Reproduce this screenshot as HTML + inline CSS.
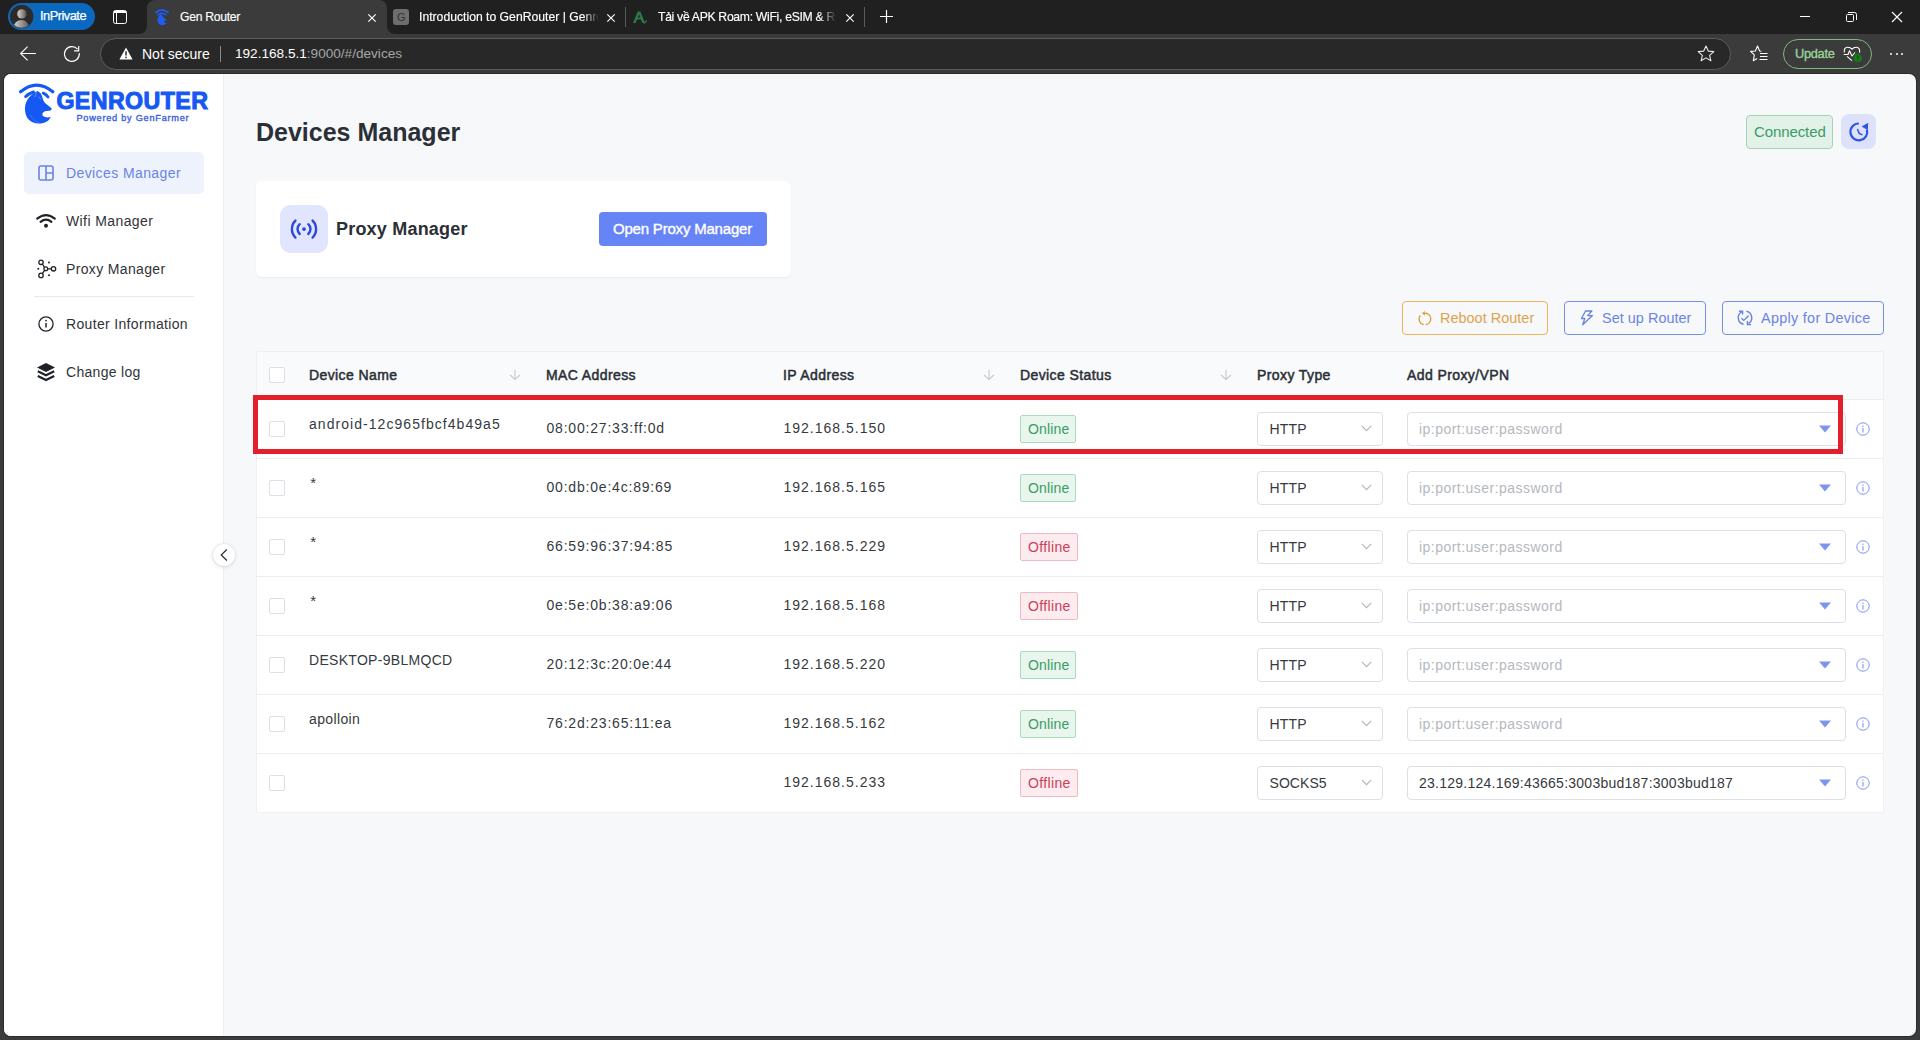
<!DOCTYPE html>
<html><head><meta charset="utf-8">
<style>
*{box-sizing:border-box;margin:0;padding:0}
html,body{width:1920px;height:1040px;overflow:hidden;background:#3b3b3b;font-family:"Liberation Sans",sans-serif;position:relative}
.a{position:absolute}
.t{position:absolute;white-space:nowrap;line-height:1}
svg{position:absolute;overflow:visible}
#tabs{left:0;top:0;width:1920px;height:34px;background:#202020}
#toolbar{left:0;top:34px;width:1920px;height:40px;background:#3b3b3b}
#view{left:4px;top:74px;width:1912px;height:962px;background:#f7f8fa;border-radius:7px;overflow:hidden;box-shadow:0 0 0 1px #2c2c2c}
#side{left:4px;top:74px;width:220px;height:962px;background:#fff;border-right:1px solid #eceef2;border-radius:7px 0 0 7px}
</style></head><body>
<!-- ============ TAB STRIP ============ -->
<div id="tabs" class="a"></div>
<!-- InPrivate pill -->
<div class="a" style="left:8px;top:3px;width:87px;height:27px;border-radius:14px;background:#0a68bf"></div>
<svg style="left:8px;top:3px" width="28" height="28" viewBox="0 0 28 28"><defs><linearGradient id="pg" x1="0" y1="0" x2="1" y2="0"><stop offset="0.2" stop-color="#c4c0bb"/><stop offset="1" stop-color="#56524e"/></linearGradient><clipPath id="avc"><circle cx="13.7" cy="13.6" r="11.2"/></clipPath></defs><circle cx="13.7" cy="13.6" r="12.4" fill="#0e3a66" stroke="#2066ac" stroke-width="1.2"/><circle cx="13.7" cy="13.6" r="11.2" fill="#2c2b29"/><g clip-path="url(#avc)"><circle cx="13.9" cy="10.9" r="4.7" fill="url(#pg)"/><path d="M4.5 27 Q6 17.2 13.6 17 Q20.2 17.2 22.2 27Z" fill="url(#pg)"/></g></svg>
<div class="t" style="left:40px;top:10px;font-size:12.8px;color:#fff;letter-spacing:-0.5px;-webkit-text-stroke:0.25px #fff">InPrivate</div>
<!-- tab actions icon -->
<div class="a" style="left:113px;top:10px;width:14px;height:14px;border:1.4px solid #fff;border-radius:2.5px"></div>
<div class="a" style="left:116px;top:11px;width:1.4px;height:12px;background:#fff"></div>
<div class="a" style="left:114px;top:11px;width:12px;height:1.6px;background:#fff"></div>
<!-- active tab -->
<div class="a" style="left:147px;top:0;width:240px;height:34px;background:#3b3b3b;border-radius:8px 8px 0 0"></div>
<div class="a" style="left:139px;top:26px;width:8px;height:8px;background:#3b3b3b"></div>
<div class="a" style="left:131px;top:18px;width:16px;height:16px;background:#202020;border-radius:0 0 8px 0"></div>
<div class="a" style="left:387px;top:26px;width:8px;height:8px;background:#3b3b3b"></div>
<div class="a" style="left:387px;top:18px;width:16px;height:16px;background:#202020;border-radius:0 0 0 8px"></div>
<svg style="left:155px;top:8px" width="14" height="18" viewBox="0 0 14 18"><path d="M1 4.5 Q7 -0.5 13 4.5" stroke="#1d5cf5" stroke-width="1.8" fill="none" stroke-linecap="round"/><path d="M3 6.8 Q7 4 11 6.8" stroke="#1d5cf5" stroke-width="1.6" fill="none" stroke-linecap="round"/><path d="M6 6 L9 10 L12 12 Q9 12.5 9 14 Q10 15.5 12 15 Q9 18 6 17 Q2 15.5 2.5 11 Q3 8 6 6Z" fill="#1d5cf5"/></svg>
<div class="t" style="left:180px;top:11px;font-size:12.2px;color:#fff;letter-spacing:-0.3px;-webkit-text-stroke:0.15px #fff">Gen Router</div>
<svg style="left:367.5px;top:13.5px" width="8" height="8" viewBox="0 0 8 8"><path d="M0.3 0.3L7.7 7.7M7.7 0.3L0.3 7.7" stroke="#fff" stroke-width="1.15"/></svg>
<!-- tab 2 -->
<div class="a" style="left:393px;top:9px;width:16px;height:16px;border-radius:3px;background:#6e6e6e"></div>
<div class="t" style="left:397px;top:12px;font-size:11px;color:#333">G</div>
<div class="t" style="left:419px;top:11px;font-size:12.2px;color:#fff;width:180px;overflow:hidden;-webkit-text-stroke:0.15px #fff;-webkit-mask-image:linear-gradient(90deg,#000 calc(100% - 16px),transparent)">Introduction to GenRouter | Genrouter</div>
<svg style="left:606.5px;top:13.8px" width="8" height="8" viewBox="0 0 8 8"><path d="M0.3 0.3L7.7 7.7M7.7 0.3L0.3 7.7" stroke="#fff" stroke-width="1.15"/></svg>
<div class="a" style="left:625px;top:7px;width:1px;height:20px;background:#5a5a5a"></div>
<!-- tab 3 -->
<svg style="left:632px;top:11px" width="16" height="13" viewBox="0 0 16 13"><path d="M1 12 L5.8 0.5 L8.4 0.5 L13 12 L10.4 12 L7.1 3.6 L3.6 12Z" fill="#2b7b47"/><path d="M3.6 7.5 L10.5 7.5" stroke="#2b7b47" stroke-width="2"/><path d="M11.2 10.8 l1.3 1.3 l2.4 -2.8" stroke="#2b7b47" stroke-width="1.1" fill="none"/></svg>
<div class="t" style="left:658px;top:11px;font-size:12.2px;color:#fff;letter-spacing:-0.3px;width:178px;overflow:hidden;-webkit-text-stroke:0.15px #fff;-webkit-mask-image:linear-gradient(90deg,#000 calc(100% - 16px),transparent)">Tải về APK Roam: WiFi, eSIM &amp; Roaming</div>
<svg style="left:845.5px;top:13.8px" width="8" height="8" viewBox="0 0 8 8"><path d="M0.3 0.3L7.7 7.7M7.7 0.3L0.3 7.7" stroke="#fff" stroke-width="1.15"/></svg>
<div class="a" style="left:864px;top:7px;width:1px;height:20px;background:#5a5a5a"></div>
<svg style="left:879.5px;top:10.2px" width="13" height="13" viewBox="0 0 13 13"><path d="M6.5 0V13M0 6.5H13" stroke="#fff" stroke-width="1.2"/></svg>
<!-- window controls -->
<div class="a" style="left:1800px;top:16px;width:10px;height:1px;background:#fff"></div>
<div class="a" style="left:1846px;top:14px;width:8px;height:8px;border:1px solid #fff;border-radius:1.5px"></div>
<svg style="left:1848px;top:12px" width="9" height="9" viewBox="0 0 9 9"><path d="M0 0.5 H6.5 Q8.5 0.5 8.5 2.5 V8" stroke="#fff" stroke-width="1" fill="none"/></svg>
<svg style="left:1892px;top:12px" width="10" height="10" viewBox="0 0 10 10"><path d="M0 0L10 10M10 0L0 10" stroke="#fff" stroke-width="1.1"/></svg>

<!-- ============ TOOLBAR ============ -->
<div id="toolbar" class="a"></div>
<svg style="left:20px;top:46px" width="17" height="16" viewBox="0 0 17 16"><path d="M15.9 7.5H0.8M7.6 0.6L0.6 7.5L7.6 14.3" stroke="#fff" stroke-width="1.1" fill="none"/></svg>
<svg style="left:64px;top:46px" width="17" height="17" viewBox="0 0 17 17"><path d="M13.57 3.24 A7.4 7.4 0 1 0 15.24 7.1" stroke="#fff" stroke-width="1.15" fill="none"/><path d="M14.7 -0.1 V4.8 H10.1" stroke="#fff" stroke-width="1.15" fill="none"/></svg>
<div class="a" style="left:100px;top:38px;width:1631px;height:32px;border-radius:16px;background:#282828;border:1px solid #5c5c5c"></div>
<svg style="left:119px;top:47px" width="14" height="13" viewBox="0 0 14 13"><path d="M7 0.5 L13.6 12.5 H0.4Z" fill="#fff"/><path d="M7 4.2V8.6" stroke="#282828" stroke-width="1.5"/><circle cx="7" cy="10.4" r="0.85" fill="#282828"/></svg>
<div class="t" style="left:142px;top:47px;font-size:14px;color:#fff">Not secure</div>
<div class="a" style="left:220px;top:46px;width:1px;height:16px;background:#8a8a8a"></div>
<div class="t" style="left:235px;top:47px;font-size:13.6px;color:#fff">192.168.5.1<span style="color:#a6a6a6">:9000/#/devices</span></div>
<svg style="left:1697px;top:45px" width="18" height="17" viewBox="0 0 18 17"><path d="M9 1 L11.3 6.1 L16.8 6.6 L12.6 10.3 L13.9 15.8 L9 12.9 L4.1 15.8 L5.4 10.3 L1.2 6.6 L6.7 6.1Z" stroke="#e8e8e8" stroke-width="1.1" fill="none" stroke-linejoin="round"/></svg>
<svg style="left:1750px;top:45px" width="18" height="17" viewBox="0 0 18 17"><path d="M11.5 6.2 L9.6 6 L7.5 1 L5.4 6 L0.6 6.4 L4.3 9.8 L3.3 15.8 L7.2 13.6" stroke="#fff" stroke-width="1.1" fill="none" stroke-linejoin="round"/><path d="M10 8.5H17.5M10 11.5H17.5M9.5 14.5H17.5" stroke="#fff" stroke-width="1"/></svg>
<div class="a" style="left:1783px;top:39px;width:89px;height:30px;border-radius:15px;border:1.3px solid #7fb87f"></div>
<div class="t" style="left:1795px;top:47.5px;font-size:12.8px;color:#9ad39a;letter-spacing:-0.3px;-webkit-text-stroke:0.35px #9ad39a">Update</div>
<svg style="left:1843px;top:45px" width="20" height="18" viewBox="0 0 20 18"><g stroke="#fff" stroke-width="1.1" fill="none" stroke-linejoin="round"><path d="M1.3 7.5 Q0.8 2.4 4.5 2.2 Q7.5 2.1 9 4.3 Q10.5 2.1 13.5 2.2 Q17.2 2.5 16.6 7.8"/><path d="M4 11.3 L9 15.6"/><path d="M0.8 9.5 H5 L6.5 5.8 L9 11 L12 7.5"/></g><circle cx="14.8" cy="13" r="4.3" fill="#17781a"/><path d="M14.8 10.8V13.6M14.8 14.6V15.3" stroke="#0b3b0b" stroke-width="0.9"/></svg>
<div class="a" style="left:1890px;top:53px;width:2.2px;height:2.2px;background:#fff;border-radius:50%"></div>
<div class="a" style="left:1895.5px;top:53px;width:2.2px;height:2.2px;background:#fff;border-radius:50%"></div>
<div class="a" style="left:1901px;top:53px;width:2.2px;height:2.2px;background:#fff;border-radius:50%"></div>

<!-- ============ VIEWPORT ============ -->
<div id="view" class="a"></div>
<div id="side" class="a"></div>
<!-- logo -->
<svg style="left:19px;top:82px" width="36" height="43" viewBox="0 0 36 43">
<path d="M1.6 9.8 Q17.6 -3.5 33.8 9.8" stroke="#1558f4" stroke-width="3.3" fill="none" stroke-linecap="round"/>
<path d="M6.6 14.6 Q10 11.5 14.5 10" stroke="#1558f4" stroke-width="2.9" fill="none" stroke-linecap="round"/>
<path d="M24.3 11.2 Q27.3 12.5 29 15" stroke="#1558f4" stroke-width="2.9" fill="none" stroke-linecap="round"/>
<path d="M18.6 9 L21.5 11 L23 14 Q24 19 26 21 L32.6 26.3 Q33.2 28.2 31 28.8 Q27.5 28.5 25.5 29.5 Q22 31.5 24 34 Q27 36.2 31.8 35 Q29 40.8 22 41.5 Q12 42 8 35.5 Q5 29.5 6.3 23 Q8 16.5 12.5 13 L15.5 10.5 Z" fill="#1558f4"/>
<path d="M11.5 33 Q13.5 38.5 20 40.5" stroke="#5f92ff" stroke-width="0.5" fill="none"/>
<path d="M19.5 15 L22 17" stroke="#7fb0ff" stroke-width="0.7"/>
<path d="M17.5 9.5 L16 15" stroke="#9fc0ff" stroke-width="0.5"/>
</svg>
<div class="t" style="left:56.4px;top:90.2px;font-size:23.2px;font-weight:bold;color:#1558f4;-webkit-text-stroke:1px #1558f4;letter-spacing:0.42px">GENROUTER</div>
<div class="t" style="left:76.5px;top:113.5px;font-size:9.2px;color:#3a60dc;letter-spacing:0.74px;-webkit-text-stroke:0.35px #3a60dc">Powered by GenFarmer</div>

<!-- nav -->
<div class="a" style="left:24px;top:152px;width:180px;height:42px;border-radius:5px;background:#eef2fd"></div>
<svg style="left:38px;top:165px" width="16" height="16" viewBox="0 0 16 16"><rect x="1" y="1" width="14" height="14" rx="2" stroke="#6a84e4" stroke-width="1.6" fill="none"/><path d="M8 1V15M8 8H15" stroke="#6a84e4" stroke-width="1.6"/></svg>
<div class="t" style="left:66px;top:166px;font-size:14px;color:#6a84e4;letter-spacing:0.4px">Devices Manager</div>

<svg style="left:36px;top:214px" width="20" height="14" viewBox="0 0 20 14"><path d="M1.2 4.6 Q10 -2.5 18.8 4.6" stroke="#1f2329" stroke-width="2.2" fill="none" stroke-linecap="round"/><path d="M4.6 7.8 Q10 3.6 15.4 7.8" stroke="#1f2329" stroke-width="2.2" fill="none" stroke-linecap="round"/><circle cx="10" cy="11.8" r="2" fill="#1f2329"/></svg>
<div class="t" style="left:66px;top:214px;font-size:14px;color:#303339;letter-spacing:0.4px">Wifi Manager</div>

<svg style="left:36px;top:259px" width="20" height="20" viewBox="0 0 20 20"><g stroke="#1f2329" stroke-width="1.3" fill="none"><circle cx="5" cy="3.3" r="2.2"/><circle cx="5" cy="16.4" r="2.2"/><circle cx="17.5" cy="9.8" r="2.2"/><circle cx="9.8" cy="9.8" r="1.9"/><path d="M6.3 5 L8.6 8.3 M6.3 14.7 L8.6 11.3 M11.7 9.8 H15.3"/></g><g fill="#1f2329"><circle cx="2.3" cy="9.8" r="1"/><circle cx="13" cy="3.5" r="1"/><circle cx="13" cy="16.2" r="1"/></g></svg>
<div class="t" style="left:66px;top:262px;font-size:14px;color:#303339;letter-spacing:0.35px">Proxy Manager</div>

<div class="a" style="left:34px;top:296px;width:160px;height:1px;background:#e8eaee"></div>

<svg style="left:38px;top:316px" width="16" height="16" viewBox="0 0 16 16"><circle cx="8" cy="8" r="7.1" stroke="#1f2329" stroke-width="1.3" fill="none"/><circle cx="8" cy="4.6" r="0.9" fill="#1f2329"/><path d="M8 7V11.5" stroke="#1f2329" stroke-width="1.5"/></svg>
<div class="t" style="left:66px;top:317px;font-size:14px;color:#303339;letter-spacing:0.33px">Router Information</div>

<svg style="left:37px;top:362px" width="18" height="20" viewBox="0 0 18 20"><path d="M9 1 L18 5.5 L9 10 L0 5.5Z" fill="#1f2329"/><path d="M0.8 9.3 L9 13.3 L17.2 9.3" stroke="#1f2329" stroke-width="2.2" fill="none" stroke-linejoin="miter"/><path d="M0.8 14 L9 18 L17.2 14" stroke="#1f2329" stroke-width="2.2" fill="none"/></svg>
<div class="t" style="left:66px;top:365px;font-size:14px;color:#303339;letter-spacing:0.3px">Change log</div>

<!-- collapse btn -->
<div class="a" style="left:212.6px;top:543.8px;width:22px;height:22px;border-radius:50%;background:#fff;box-shadow:0 1px 4px rgba(0,0,0,0.12),0 0 0 1px #f0f1f4"></div>
<svg style="left:220px;top:549px" width="8" height="12" viewBox="0 0 8 12"><path d="M6.8 0.5 L1.2 6 L6.8 11.5" stroke="#2b2f36" stroke-width="1.2" fill="none"/></svg>


<!-- ============ MAIN ============ -->
<div class="t" style="left:256px;top:119.7px;font-size:25px;font-weight:bold;color:#2b2f36">Devices Manager</div>

<div class="a" style="left:1746px;top:115px;width:87px;height:34px;border-radius:4px;background:#e2f2e9;border:1px solid #a5d3b7"></div>
<div class="t" style="left:1754px;top:124px;font-size:15px;color:#3a9b66;letter-spacing:-0.1px">Connected</div>
<div class="a" style="left:1841px;top:114px;width:35px;height:35px;border-radius:8px;background:#dde1fb"></div>
<svg style="left:1848px;top:121px" width="22" height="22" viewBox="0 0 22 22"><path d="M10.8 2.5 A8.4 8.4 0 1 0 18.9 8.6" stroke="#2f53e6" stroke-width="2.2" fill="none"/><path d="M13.6 5.6 L20.2 1.8 L19.8 9.2Z" fill="#2f53e6"/><path d="M9.4 8 L11.2 12.4 L14.4 13.9" stroke="#2f53e6" stroke-width="1.5" fill="none"/></svg>

<!-- proxy manager card -->
<div class="a" style="left:256px;top:181px;width:535px;height:96px;border-radius:6px;background:#fff;box-shadow:0 1px 2px rgba(0,0,0,0.06)"></div>
<div class="a" style="left:280px;top:205px;width:48px;height:48px;border-radius:11px;background:#e1e5fd"></div>
<svg style="left:290px;top:218px" width="28" height="22" viewBox="0 0 28 22"><g stroke="#2b48de" stroke-width="2.4" fill="none" stroke-linecap="round"><path d="M5.4 2.6 A12.1 12.1 0 0 0 5.4 19.6"/><path d="M22.6 2.6 A12.1 12.1 0 0 1 22.6 19.6"/><path d="M9.7 6.2 A6.6 6.6 0 0 0 9.7 16"/><path d="M18.3 6.2 A6.6 6.6 0 0 1 18.3 16"/></g><circle cx="14" cy="11.1" r="1.9" fill="#2b48de"/></svg>
<div class="t" style="left:336px;top:219.5px;font-size:18px;font-weight:bold;color:#2b2f36;letter-spacing:0.2px">Proxy Manager</div>
<div class="a" style="left:599px;top:212px;width:168px;height:34px;border-radius:4px;background:#6684f6"></div>
<div class="t" style="left:613px;top:220.5px;font-size:15px;color:#fff;letter-spacing:-0.2px;-webkit-text-stroke:0.35px #fff">Open Proxy Manager</div>

<!-- action buttons -->
<div class="a" style="left:1402px;top:301px;width:146px;height:34px;border-radius:4px;background:transparent;border:1px solid #ebb35e"></div>
<svg style="left:1417px;top:311px" width="16" height="16" viewBox="0 0 16 16"><g stroke="#dea141" stroke-width="1.3" fill="none"><path d="M7.6 2.3 A5.6 5.6 0 0 1 8.6 13.6"/><path d="M6.8 13.6 A5.6 5.6 0 0 1 3.4 4.4"/></g><path d="M4.9 2.3 L7.9 -0.1 L7.9 4.7Z" fill="#dea141"/></svg>
<div class="t" style="left:1440px;top:311px;font-size:14.4px;color:#dfa24a;letter-spacing:0.05px">Reboot Router</div>

<div class="a" style="left:1564px;top:301px;width:142px;height:34px;border-radius:4px;background:transparent;border:1px solid #7890e2"></div>
<svg style="left:1579px;top:309px" width="16" height="18" viewBox="0 0 16 18"><path d="M6.5 2 H12.8 L8.7 6.6 H13.5 L3.7 15.7 L5.8 9.5 H2.5Z" stroke="#6a82de" stroke-width="1.3" fill="none" stroke-linejoin="round"/></svg>
<div class="t" style="left:1602px;top:311px;font-size:14.4px;color:#6b84e4;letter-spacing:0.05px">Set up Router</div>

<div class="a" style="left:1722px;top:301px;width:162px;height:34px;border-radius:4px;background:transparent;border:1px solid #7890e2"></div>
<svg style="left:1736px;top:309px" width="18" height="18" viewBox="0 0 18 18"><g stroke="#6a82de" stroke-width="1.4" fill="none"><path d="M6.4 2.6 A6.6 6.6 0 0 0 7.6 15.2"/><path d="M3 2.25 H6.6 V5.6"/><path d="M10.4 2.3 A6.6 6.6 0 0 1 12.6 14.4"/><path d="M15 15.5 H11.4 V12.1"/><path d="M5.4 9.2 L7.8 11.4 L12.6 6.8"/></g></svg>
<div class="t" style="left:1761px;top:311px;font-size:14.4px;color:#6b84e4;letter-spacing:0.3px">Apply for Device</div>

<!-- ============ TABLE ============ -->
<div class="a" style="left:256px;top:351px;width:1628px;height:462px;background:#fff;border:1px solid #eef0f3;border-radius:2px"></div>
<div class="a" style="left:257px;top:352px;width:1626px;height:48px;background:#f9fafc;border-bottom:1px solid #ebedf1"></div>
<div class="a" style="left:269px;top:367px;width:16px;height:16px;border:1px solid #dcdfe6;border-radius:2px;background:#fff"></div>
<div class="t" style="left:309px;top:368px;font-size:14px;color:#2b2f36;-webkit-text-stroke:0.5px #2b2f36;letter-spacing:0.4px">Device Name</div>
<div class="t" style="left:546px;top:368px;font-size:14px;color:#2b2f36;-webkit-text-stroke:0.5px #2b2f36;letter-spacing:0.4px">MAC Address</div>
<div class="t" style="left:783px;top:368px;font-size:14px;color:#2b2f36;-webkit-text-stroke:0.5px #2b2f36;letter-spacing:0.4px">IP Address</div>
<div class="t" style="left:1020px;top:368px;font-size:14px;color:#2b2f36;-webkit-text-stroke:0.5px #2b2f36;letter-spacing:0.4px">Device Status</div>
<div class="t" style="left:1257px;top:368px;font-size:14px;color:#2b2f36;-webkit-text-stroke:0.5px #2b2f36;letter-spacing:0.4px">Proxy Type</div>
<div class="t" style="left:1407px;top:368px;font-size:14px;color:#2b2f36;-webkit-text-stroke:0.5px #2b2f36;letter-spacing:0.4px">Add Proxy/VPN</div>
<svg style="left:509px;top:368px" width="12" height="14" viewBox="0 0 12 14"><path d="M6 1.8V11.4M1.1 7L6 11.6L10.9 7" stroke="#c5c7cb" stroke-width="1.05" fill="none"/></svg>
<svg style="left:983px;top:368px" width="12" height="14" viewBox="0 0 12 14"><path d="M6 1.8V11.4M1.1 7L6 11.6L10.9 7" stroke="#c5c7cb" stroke-width="1.05" fill="none"/></svg>
<svg style="left:1220px;top:368px" width="12" height="14" viewBox="0 0 12 14"><path d="M6 1.8V11.4M1.1 7L6 11.6L10.9 7" stroke="#c5c7cb" stroke-width="1.05" fill="none"/></svg>
<div class="a" style="left:269px;top:421px;width:16px;height:16px;border:1px solid #dcdfe6;border-radius:2px;background:#fff"></div>
<div class="t" style="left:309px;top:417px;font-size:14px;color:#363a40;letter-spacing:1.05px">android-12c965fbcf4b49a5</div>
<div class="t" style="left:546.5px;top:421px;font-size:14px;color:#363a40;letter-spacing:0.8px">08:00:27:33:ff:0d</div>
<div class="t" style="left:783.5px;top:421px;font-size:14px;color:#363a40;letter-spacing:1.0px">192.168.5.150</div>
<div class="a" style="left:1020px;top:415px;width:56px;height:28px;border-radius:2px;background:#e8f6ee;border:1px solid #a8dcbb"></div>
<div class="t" style="left:1028px;top:422px;font-size:14px;color:#3a9c64;letter-spacing:0.15px">Online</div>
<div class="a" style="left:1257px;top:412px;width:126px;height:34px;border-radius:4px;background:#fff;border:1px solid #dcdfe6"></div>
<div class="t" style="left:1269.5px;top:422px;font-size:14px;color:#363a40;letter-spacing:0.15px">HTTP</div>
<svg style="left:1361px;top:425px" width="11" height="7" viewBox="0 0 11 7"><path d="M0.8 0.8L5.5 5.6L10.2 0.8" stroke="#b0b4bc" stroke-width="1.1" fill="none"/></svg>
<div class="a" style="left:1407px;top:412px;width:439px;height:34px;border-radius:4px;background:#fff;border:1px solid #dcdfe6"></div>
<div class="t" style="left:1419px;top:422px;font-size:14px;color:#b5b8bd;letter-spacing:0.47px">ip:port:user:password</div>
<svg style="left:1819px;top:425px" width="12" height="8" viewBox="0 0 12 8"><path d="M0 0.5H12L6 7.5Z" fill="#7e95f0"/></svg>
<svg style="left:1855.5px;top:422px" width="14" height="14" viewBox="0 0 14 14"><circle cx="7" cy="7" r="6.2" stroke="#7e95f0" stroke-width="1" fill="none"/><circle cx="7" cy="4.2" r="0.7" fill="#7e95f0"/><path d="M7 6V10.5" stroke="#7e95f0" stroke-width="1.1"/></svg>
<div class="a" style="left:257px;top:458px;width:1626px;height:1px;background:#ebedf1"></div>
<div class="a" style="left:269px;top:480px;width:16px;height:16px;border:1px solid #dcdfe6;border-radius:2px;background:#fff"></div>
<div class="t" style="left:310.2px;top:474.5px;font-size:15px;color:#363a40">*</div>
<div class="t" style="left:546.5px;top:480px;font-size:14px;color:#363a40;letter-spacing:0.8px">00:db:0e:4c:89:69</div>
<div class="t" style="left:783.5px;top:480px;font-size:14px;color:#363a40;letter-spacing:1.0px">192.168.5.165</div>
<div class="a" style="left:1020px;top:474px;width:56px;height:28px;border-radius:2px;background:#e8f6ee;border:1px solid #a8dcbb"></div>
<div class="t" style="left:1028px;top:481px;font-size:14px;color:#3a9c64;letter-spacing:0.15px">Online</div>
<div class="a" style="left:1257px;top:471px;width:126px;height:34px;border-radius:4px;background:#fff;border:1px solid #dcdfe6"></div>
<div class="t" style="left:1269.5px;top:481px;font-size:14px;color:#363a40;letter-spacing:0.15px">HTTP</div>
<svg style="left:1361px;top:484px" width="11" height="7" viewBox="0 0 11 7"><path d="M0.8 0.8L5.5 5.6L10.2 0.8" stroke="#b0b4bc" stroke-width="1.1" fill="none"/></svg>
<div class="a" style="left:1407px;top:471px;width:439px;height:34px;border-radius:4px;background:#fff;border:1px solid #dcdfe6"></div>
<div class="t" style="left:1419px;top:481px;font-size:14px;color:#b5b8bd;letter-spacing:0.47px">ip:port:user:password</div>
<svg style="left:1819px;top:484px" width="12" height="8" viewBox="0 0 12 8"><path d="M0 0.5H12L6 7.5Z" fill="#7e95f0"/></svg>
<svg style="left:1855.5px;top:481px" width="14" height="14" viewBox="0 0 14 14"><circle cx="7" cy="7" r="6.2" stroke="#7e95f0" stroke-width="1" fill="none"/><circle cx="7" cy="4.2" r="0.7" fill="#7e95f0"/><path d="M7 6V10.5" stroke="#7e95f0" stroke-width="1.1"/></svg>
<div class="a" style="left:257px;top:517px;width:1626px;height:1px;background:#ebedf1"></div>
<div class="a" style="left:269px;top:539px;width:16px;height:16px;border:1px solid #dcdfe6;border-radius:2px;background:#fff"></div>
<div class="t" style="left:310.2px;top:533.5px;font-size:15px;color:#363a40">*</div>
<div class="t" style="left:546.5px;top:539px;font-size:14px;color:#363a40;letter-spacing:0.8px">66:59:96:37:94:85</div>
<div class="t" style="left:783.5px;top:539px;font-size:14px;color:#363a40;letter-spacing:1.0px">192.168.5.229</div>
<div class="a" style="left:1020px;top:533px;width:58px;height:28px;border-radius:2px;background:#fdecef;border:1px solid #f1bac3"></div>
<div class="t" style="left:1028px;top:540px;font-size:14px;color:#cc4058;letter-spacing:0.35px">Offline</div>
<div class="a" style="left:1257px;top:530px;width:126px;height:34px;border-radius:4px;background:#fff;border:1px solid #dcdfe6"></div>
<div class="t" style="left:1269.5px;top:540px;font-size:14px;color:#363a40;letter-spacing:0.15px">HTTP</div>
<svg style="left:1361px;top:543px" width="11" height="7" viewBox="0 0 11 7"><path d="M0.8 0.8L5.5 5.6L10.2 0.8" stroke="#b0b4bc" stroke-width="1.1" fill="none"/></svg>
<div class="a" style="left:1407px;top:530px;width:439px;height:34px;border-radius:4px;background:#fff;border:1px solid #dcdfe6"></div>
<div class="t" style="left:1419px;top:540px;font-size:14px;color:#b5b8bd;letter-spacing:0.47px">ip:port:user:password</div>
<svg style="left:1819px;top:543px" width="12" height="8" viewBox="0 0 12 8"><path d="M0 0.5H12L6 7.5Z" fill="#7e95f0"/></svg>
<svg style="left:1855.5px;top:540px" width="14" height="14" viewBox="0 0 14 14"><circle cx="7" cy="7" r="6.2" stroke="#7e95f0" stroke-width="1" fill="none"/><circle cx="7" cy="4.2" r="0.7" fill="#7e95f0"/><path d="M7 6V10.5" stroke="#7e95f0" stroke-width="1.1"/></svg>
<div class="a" style="left:257px;top:576px;width:1626px;height:1px;background:#ebedf1"></div>
<div class="a" style="left:269px;top:598px;width:16px;height:16px;border:1px solid #dcdfe6;border-radius:2px;background:#fff"></div>
<div class="t" style="left:310.2px;top:592.5px;font-size:15px;color:#363a40">*</div>
<div class="t" style="left:546.5px;top:598px;font-size:14px;color:#363a40;letter-spacing:0.8px">0e:5e:0b:38:a9:06</div>
<div class="t" style="left:783.5px;top:598px;font-size:14px;color:#363a40;letter-spacing:1.0px">192.168.5.168</div>
<div class="a" style="left:1020px;top:592px;width:58px;height:28px;border-radius:2px;background:#fdecef;border:1px solid #f1bac3"></div>
<div class="t" style="left:1028px;top:599px;font-size:14px;color:#cc4058;letter-spacing:0.35px">Offline</div>
<div class="a" style="left:1257px;top:589px;width:126px;height:34px;border-radius:4px;background:#fff;border:1px solid #dcdfe6"></div>
<div class="t" style="left:1269.5px;top:599px;font-size:14px;color:#363a40;letter-spacing:0.15px">HTTP</div>
<svg style="left:1361px;top:602px" width="11" height="7" viewBox="0 0 11 7"><path d="M0.8 0.8L5.5 5.6L10.2 0.8" stroke="#b0b4bc" stroke-width="1.1" fill="none"/></svg>
<div class="a" style="left:1407px;top:589px;width:439px;height:34px;border-radius:4px;background:#fff;border:1px solid #dcdfe6"></div>
<div class="t" style="left:1419px;top:599px;font-size:14px;color:#b5b8bd;letter-spacing:0.47px">ip:port:user:password</div>
<svg style="left:1819px;top:602px" width="12" height="8" viewBox="0 0 12 8"><path d="M0 0.5H12L6 7.5Z" fill="#7e95f0"/></svg>
<svg style="left:1855.5px;top:599px" width="14" height="14" viewBox="0 0 14 14"><circle cx="7" cy="7" r="6.2" stroke="#7e95f0" stroke-width="1" fill="none"/><circle cx="7" cy="4.2" r="0.7" fill="#7e95f0"/><path d="M7 6V10.5" stroke="#7e95f0" stroke-width="1.1"/></svg>
<div class="a" style="left:257px;top:635px;width:1626px;height:1px;background:#ebedf1"></div>
<div class="a" style="left:269px;top:657px;width:16px;height:16px;border:1px solid #dcdfe6;border-radius:2px;background:#fff"></div>
<div class="t" style="left:309px;top:653px;font-size:14px;color:#363a40;letter-spacing:0.3px">DESKTOP-9BLMQCD</div>
<div class="t" style="left:546.5px;top:657px;font-size:14px;color:#363a40;letter-spacing:0.8px">20:12:3c:20:0e:44</div>
<div class="t" style="left:783.5px;top:657px;font-size:14px;color:#363a40;letter-spacing:1.0px">192.168.5.220</div>
<div class="a" style="left:1020px;top:651px;width:56px;height:28px;border-radius:2px;background:#e8f6ee;border:1px solid #a8dcbb"></div>
<div class="t" style="left:1028px;top:658px;font-size:14px;color:#3a9c64;letter-spacing:0.15px">Online</div>
<div class="a" style="left:1257px;top:648px;width:126px;height:34px;border-radius:4px;background:#fff;border:1px solid #dcdfe6"></div>
<div class="t" style="left:1269.5px;top:658px;font-size:14px;color:#363a40;letter-spacing:0.15px">HTTP</div>
<svg style="left:1361px;top:661px" width="11" height="7" viewBox="0 0 11 7"><path d="M0.8 0.8L5.5 5.6L10.2 0.8" stroke="#b0b4bc" stroke-width="1.1" fill="none"/></svg>
<div class="a" style="left:1407px;top:648px;width:439px;height:34px;border-radius:4px;background:#fff;border:1px solid #dcdfe6"></div>
<div class="t" style="left:1419px;top:658px;font-size:14px;color:#b5b8bd;letter-spacing:0.47px">ip:port:user:password</div>
<svg style="left:1819px;top:661px" width="12" height="8" viewBox="0 0 12 8"><path d="M0 0.5H12L6 7.5Z" fill="#7e95f0"/></svg>
<svg style="left:1855.5px;top:658px" width="14" height="14" viewBox="0 0 14 14"><circle cx="7" cy="7" r="6.2" stroke="#7e95f0" stroke-width="1" fill="none"/><circle cx="7" cy="4.2" r="0.7" fill="#7e95f0"/><path d="M7 6V10.5" stroke="#7e95f0" stroke-width="1.1"/></svg>
<div class="a" style="left:257px;top:694px;width:1626px;height:1px;background:#ebedf1"></div>
<div class="a" style="left:269px;top:716px;width:16px;height:16px;border:1px solid #dcdfe6;border-radius:2px;background:#fff"></div>
<div class="t" style="left:309px;top:712px;font-size:14px;color:#363a40;letter-spacing:0.37px">apolloin</div>
<div class="t" style="left:546.5px;top:716px;font-size:14px;color:#363a40;letter-spacing:0.8px">76:2d:23:65:11:ea</div>
<div class="t" style="left:783.5px;top:716px;font-size:14px;color:#363a40;letter-spacing:1.0px">192.168.5.162</div>
<div class="a" style="left:1020px;top:710px;width:56px;height:28px;border-radius:2px;background:#e8f6ee;border:1px solid #a8dcbb"></div>
<div class="t" style="left:1028px;top:717px;font-size:14px;color:#3a9c64;letter-spacing:0.15px">Online</div>
<div class="a" style="left:1257px;top:707px;width:126px;height:34px;border-radius:4px;background:#fff;border:1px solid #dcdfe6"></div>
<div class="t" style="left:1269.5px;top:717px;font-size:14px;color:#363a40;letter-spacing:0.15px">HTTP</div>
<svg style="left:1361px;top:720px" width="11" height="7" viewBox="0 0 11 7"><path d="M0.8 0.8L5.5 5.6L10.2 0.8" stroke="#b0b4bc" stroke-width="1.1" fill="none"/></svg>
<div class="a" style="left:1407px;top:707px;width:439px;height:34px;border-radius:4px;background:#fff;border:1px solid #dcdfe6"></div>
<div class="t" style="left:1419px;top:717px;font-size:14px;color:#b5b8bd;letter-spacing:0.47px">ip:port:user:password</div>
<svg style="left:1819px;top:720px" width="12" height="8" viewBox="0 0 12 8"><path d="M0 0.5H12L6 7.5Z" fill="#7e95f0"/></svg>
<svg style="left:1855.5px;top:717px" width="14" height="14" viewBox="0 0 14 14"><circle cx="7" cy="7" r="6.2" stroke="#7e95f0" stroke-width="1" fill="none"/><circle cx="7" cy="4.2" r="0.7" fill="#7e95f0"/><path d="M7 6V10.5" stroke="#7e95f0" stroke-width="1.1"/></svg>
<div class="a" style="left:257px;top:753px;width:1626px;height:1px;background:#ebedf1"></div>
<div class="a" style="left:269px;top:775px;width:16px;height:16px;border:1px solid #dcdfe6;border-radius:2px;background:#fff"></div>
<div class="t" style="left:783.5px;top:775px;font-size:14px;color:#363a40;letter-spacing:1.0px">192.168.5.233</div>
<div class="a" style="left:1020px;top:769px;width:58px;height:28px;border-radius:2px;background:#fdecef;border:1px solid #f1bac3"></div>
<div class="t" style="left:1028px;top:776px;font-size:14px;color:#cc4058;letter-spacing:0.35px">Offline</div>
<div class="a" style="left:1257px;top:766px;width:126px;height:34px;border-radius:4px;background:#fff;border:1px solid #dcdfe6"></div>
<div class="t" style="left:1269.5px;top:776px;font-size:14px;color:#363a40;letter-spacing:0.05px">SOCKS5</div>
<svg style="left:1361px;top:779px" width="11" height="7" viewBox="0 0 11 7"><path d="M0.8 0.8L5.5 5.6L10.2 0.8" stroke="#b0b4bc" stroke-width="1.1" fill="none"/></svg>
<div class="a" style="left:1407px;top:766px;width:439px;height:34px;border-radius:4px;background:#fff;border:1px solid #dcdfe6"></div>
<div class="t" style="left:1419px;top:776px;font-size:14px;color:#363a40;letter-spacing:0.25px">23.129.124.169:43665:3003bud187:3003bud187</div>
<svg style="left:1819px;top:779px" width="12" height="8" viewBox="0 0 12 8"><path d="M0 0.5H12L6 7.5Z" fill="#7e95f0"/></svg>
<svg style="left:1855.5px;top:776px" width="14" height="14" viewBox="0 0 14 14"><circle cx="7" cy="7" r="6.2" stroke="#7e95f0" stroke-width="1" fill="none"/><circle cx="7" cy="4.2" r="0.7" fill="#7e95f0"/><path d="M7 6V10.5" stroke="#7e95f0" stroke-width="1.1"/></svg>
<div class="a" style="left:253px;top:395px;width:1590px;height:59px;border:5px solid #e21f2a"></div>
</body></html>
